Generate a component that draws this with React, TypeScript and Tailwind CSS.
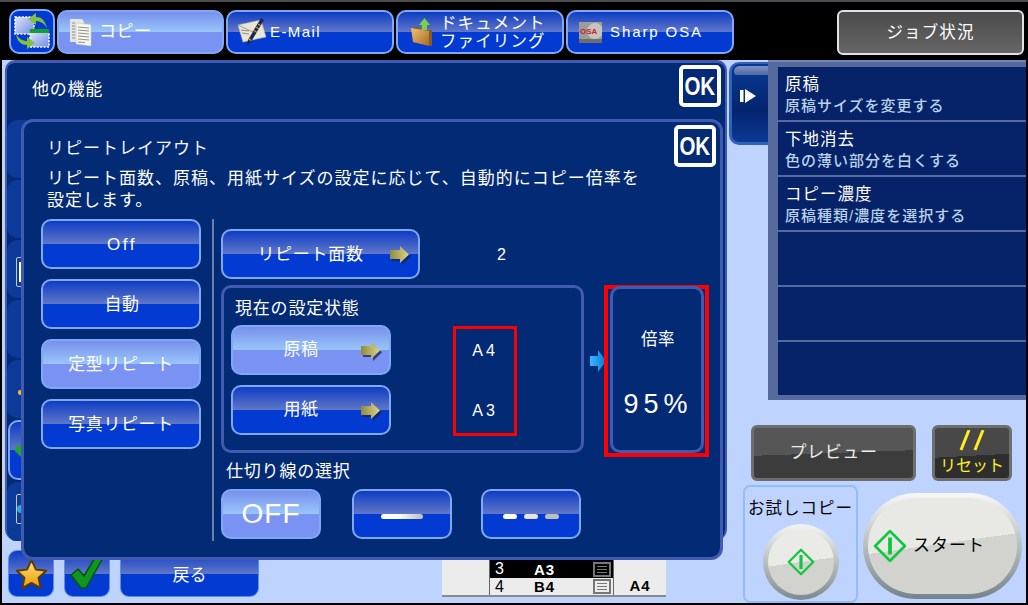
import React from "react";

const normal = "bg-[linear-gradient(#0e3cc4_0%,#6178c8_50%,#033ad2_50%,#033ad2_100%)]";
const selected = "bg-[linear-gradient(#7690ec_0%,#9ac6fa_50%,#7a93f2_50%,#7a93f2_100%)]";

function Gloss({ on, className, children }: { on?: boolean; className?: string; children?: React.ReactNode }) {
  return (
    <div className={`relative flex shrink-0 items-center justify-center rounded-[10px] border-2 border-[#7fa9f6] text-white ${on ? selected : normal} ${className ?? ""}`}>
      {children}
    </div>
  );
}

function Gold({ id }: { id: string }) {
  return (
    <svg width="23" height="20" viewBox="0 0 23 20" className="absolute right-[6px] top-[15px]">
      <defs>
        <linearGradient id={id} x1="0" y1="0" x2="1" y2="0">
          <stop offset="0" stopColor="#8f8a3e" />
          <stop offset="1" stopColor="#dcd68c" />
        </linearGradient>
      </defs>
      <path d="M1 4h10V0l9 8.500-9 8.500v-4H1z" fill="#1c2450" opacity=".75" transform="translate(2 2)" />
      <path d="M1 4h10V0l9 8.500-9 8.500v-4H1z" fill={`url(#${id})`} />
    </svg>
  );
}

function OkBtn() {
  return (
    <div className="flex h-[42px] w-[42px] items-center justify-center rounded-[5px] border-4 border-white bg-[#032a75] text-white">
      <span className="inline-block scale-x-[0.82] font-['Liberation_Sans',sans-serif] text-[25px] font-bold leading-none">OK</span>
    </div>
  );
}

function Diamond({ size }: { size: number }) {
  return (
    <svg width={size} height={size} viewBox="0 0 32 32">
      <path d="M16 2 30 16 16 30 2 16z" fill="none" stroke="#12c63f" strokeWidth="2.6" strokeLinejoin="round" />
      <path d="M16 8v16" stroke="#12c63f" strokeWidth="3.6" />
    </svg>
  );
}

function SwapIcon() {
  return (
    <svg width="38" height="38" viewBox="0 0 38 38">
      <defs>
        <linearGradient id="scr" x1="0" y1="0" x2="1" y2="1">
          <stop offset="0" stopColor="#dfe6fa" />
          <stop offset="1" stopColor="#6f8be0" />
        </linearGradient>
      </defs>
      <rect x="2" y="4" width="19" height="17" fill="url(#scr)" stroke="#fff" strokeWidth="1.6" strokeDasharray="2 1.4" />
      <rect x="17" y="19" width="19" height="15" fill="url(#scr)" stroke="#fff" strokeWidth="1.6" strokeDasharray="2 1.4" />
      <rect x="17" y="16" width="19" height="4" fill="#12a02c" />
      <path d="M34 15C32 7 28 4 23 4V0l-8 6 8 6V8c4 0 8 2 11 7z" fill="#7fc23e" />
      <path d="M3 21c1 8 6 11 11 11v4l8-6-8-6v4c-4 0-8-2-11-7z" fill="#7fc23e" />
    </svg>
  );
}

function CopyIcon() {
  return (
    <svg width="24" height="29" viewBox="0 0 24 29">
      <path d="M1 1h12l2 3v20H1z" fill="#e6e6e0" />
      <path d="M7 5 22 6.500V28L7 26z" fill="#f7f7f2" stroke="#c5c5bf" strokeWidth=".6" />
      <path d="M3 5h3M3 8h3M3 11h3M3 14h3M3 17h3M3 20h3M9 9l11 1M9 12l11 1M9 15l11 1M9 18l11 1M9 21l11 1M9 24l7 .6" stroke="#77776f" strokeWidth=".8" />
    </svg>
  );
}

function MailIcon() {
  return (
    <svg width="30" height="30" viewBox="0 0 30 30">
      <path d="M1 8 24 3l5 17-23 5z" fill="#e9e6d8" stroke="#b8b4a2" strokeWidth=".6" />
      <path d="M1 8 16 15 24 3" fill="none" stroke="#8f8c7c" strokeWidth=".8" />
      <path d="M4 13l8 1M5 16l7 1" stroke="#77756a" strokeWidth=".8" />
      <path d="M24 1 27 3 14 25 10 29 11 23z" fill="#1c2a50" />
      <path d="M21 7 24 9M19 10l3 2M17 13.500l3 2" stroke="#c9953a" strokeWidth="1.3" />
      <path d="M12 22l2 1.500" stroke="#d8a548" strokeWidth="1.500" />
    </svg>
  );
}

function FolderIcon() {
  return (
    <svg width="24" height="30" viewBox="0 0 24 30">
      <defs>
        <linearGradient id="fold" x1="0" y1="0" x2="1" y2="1">
          <stop offset="0" stopColor="#f0c078" />
          <stop offset="1" stopColor="#a86a22" />
        </linearGradient>
      </defs>
      <path d="M9 8 14.500 1 20 8h-3v7h-5V8z" fill="#7fd048" />
      <path d="M3 10h6l2 3h11v16L3 25z" fill="#8a5a20" />
      <path d="M1 11 19 14v15L3 25z" fill="url(#fold)" />
    </svg>
  );
}

function OsaIcon() {
  return (
    <svg width="23" height="21" viewBox="0 0 23 21">
      <rect width="23" height="21" fill="#9c9c98" />
      <rect width="23" height="4" y="17" fill="#6e6e6a" />
      <circle cx="16" cy="9" r="8" fill="#c4c4c0" />
      <text x="1" y="12" fontFamily="Liberation Sans" fontWeight="700" fontSize="8" fill="#c8202c">OSA</text>
    </svg>
  );
}

function Star() {
  return (
    <svg width="33" height="33" viewBox="0 0 32 32">
      <defs>
        <linearGradient id="st" x1="0" y1="0" x2="0" y2="1">
          <stop offset="0" stopColor="#ffe27a" />
          <stop offset="1" stopColor="#e89a08" />
        </linearGradient>
      </defs>
      <path d="M16 2l4.300 9.300 10 1.100-7.500 6.800 2.100 10-8.900-5.100-8.900 5.100 2.100-10-7.500-6.800 10-1.100z" fill="url(#st)" stroke="#5c3a00" strokeWidth="1.800" strokeLinejoin="round" />
    </svg>
  );
}

function Check() {
  return (
    <svg width="34" height="34" viewBox="0 0 34 34">
      <path d="M1 19l7-6 6 7L26 0l7 2-17 30h-5z" fill="#10961f" stroke="#07500d" strokeWidth="1.500" strokeLinejoin="round" />
    </svg>
  );
}

function Tile({ className, children }: { className?: string; children?: React.ReactNode }) {
  return <div className={`relative h-[58px] w-[30px] rounded-[10px] bg-[#0c3a98] ${className ?? ""}`}>{children}</div>;
}

const rows = [
  ["原稿", "原稿サイズを変更する"],
  ["下地消去", "色の薄い部分を白くする"],
  ["コピー濃度", "原稿種類/濃度を選択する"],
  ["", ""],
  ["", ""],
  ["", ""],
];

function Lines() {
  return (
    <div className="flex w-[18px] flex-col gap-[2px] border-2 border-[#777] p-[2px]">
      <div className="h-px bg-[#777]" />
      <div className="h-px bg-[#777]" />
      <div className="h-px bg-[#777]" />
    </div>
  );
}

export default function App() {
  return (
    <div className="relative flex h-[605px] w-[1028px] flex-col overflow-hidden bg-black font-['Liberation_Sans','Noto_Sans_CJK_JP',sans-serif] text-white">
      <div className="h-[2px] shrink-0 bg-[#4b4b50]" />

      {/* header */}
      <div className="flex h-[58px] shrink-0 pl-[9px] pt-[7px]">
        <div className="flex h-[45px] w-[46px] items-center justify-center rounded-[10px] border-2 border-[#7fa9f6] bg-[#033ad2]">
          <SwapIcon />
        </div>
        <Gloss on className="ml-[2px] mt-[1px] h-[44px] w-[167px] !justify-start pl-[10px]">
          <CopyIcon />
          <span className="ml-[6px] text-[17px] tracking-[0.5px]">コピー</span>
        </Gloss>
        <Gloss className="ml-[2px] mt-[1px] h-[44px] w-[168px] !justify-start pl-[9px]">
          <MailIcon />
          <span className="ml-[3px] text-[15px] tracking-[1.4px]">E-Mail</span>
        </Gloss>
        <Gloss className="ml-[2px] mt-[1px] h-[44px] w-[168px] !justify-start pl-[12px]">
          <FolderIcon />
          <span className="ml-[6px] text-center text-[16.500px] leading-[18px] tracking-[1.1px]">ドキュメント<br />ファイリング</span>
        </Gloss>
        <Gloss className="ml-[2px] mt-[1px] h-[44px] w-[168px] !justify-start pl-[11px]">
          <OsaIcon />
          <span className="ml-[8px] text-[15px] tracking-[1.900px]">Sharp OSA</span>
        </Gloss>
        <div className="ml-[103px] mt-[1px] flex h-[45px] w-[187px] items-center justify-center rounded-[6px] border-2 border-[#e2e2e2] bg-[linear-gradient(#4a4a4a,#666)] text-[16.500px] tracking-[1.1px]">
          ジョブ状況
        </div>
      </div>

      {/* main */}
      <div className="relative flex min-h-0 flex-1 border-b-2 border-l-2 border-r-2 border-black bg-[#bfd3ff]">
        {/* left column */}
        <div className="flex w-[725px] shrink-0 flex-col pl-[3px]">
          <div className="relative h-[481px] w-[722px] overflow-hidden rounded-b-[12px] rounded-tl-[10px] rounded-tr-[10px] border-l-2 border-r-2 border-t-[3px] border-[#3f5ab0] bg-[#032a75]">
            <div className="flex h-[57px] items-start justify-between pl-[25px] pr-[4px] pt-[2px]">
              <span className="mt-[12px] text-[17px] tracking-[0.75px]">他の機能</span>
              <OkBtn />
            </div>
            <div className="flex flex-col gap-[2px]">
              <Tile />
              <Tile />
              <Tile className="overflow-hidden">
                <div className="absolute left-[9px] top-[17px] h-[30px] w-[14px] rounded-[2px] border border-[#c8c8c8] bg-[#0c3a98] pl-[2px] pt-[4px]">
                  <div className="h-[20px] w-[4px] bg-white" />
                </div>
              </Tile>
              <Tile />
              <Tile>
                <div className="absolute left-[11px] top-[30px] h-[5px] w-[4px] rounded-full bg-[#ffb020]" />
              </Tile>
              <Gloss className="ml-[1px] h-[60px] w-[30px] !justify-start">
                <div className="ml-[4px] h-0 w-0 border-y-[10px] border-r-[10px] border-y-transparent border-r-[#1fa52a]" />
              </Gloss>
              <Tile className="h-[60px]">
                <div className="absolute left-[9px] top-[12px] flex h-[30px] w-[14px] items-center rounded-[2px] border border-[#c8c8c8]">
                  <div className="h-[8px] w-[6px] rounded-l-full bg-[#2aa8f0]" />
                </div>
              </Tile>
            </div>
          </div>

          {/* bottom row */}
          <div className="mt-[9px] flex h-[47px] pl-[3px]">
            <div className="flex h-[47px] w-[46px] items-end justify-center rounded-[9px] border border-[#5b8cf0] bg-[linear-gradient(#0e3cc4_0%,#6178c8_52%,#033ad2_52%,#033ad2_100%)] pb-[5px]">
              <Star />
            </div>
            <div className="ml-[10px] flex h-[47px] w-[46px] items-end justify-center rounded-[9px] border border-[#5b8cf0] bg-[linear-gradient(#0e3cc4_0%,#6178c8_52%,#033ad2_52%,#033ad2_100%)] pb-[6px]">
              <Check />
            </div>
            <div className="ml-[10px] flex h-[47px] w-[139px] items-end justify-center rounded-[9px] border border-[#5b8cf0] bg-[linear-gradient(#0e3cc4_0%,#6178c8_52%,#033ad2_52%,#033ad2_100%)] pb-[10px] text-[17px] leading-[20px]">
              戻る
            </div>
            <div className="ml-[183px] flex h-[47px] w-[224px] border-b-2 border-[#8a8a8a] bg-[#ececec] text-black">
              <div className="w-[48px] border-r border-[#666]" />
              <div className="flex w-[124px] flex-col border-r border-[#666]">
                <div className="flex h-[28px] items-end bg-black pl-[5px] pr-[2px] text-white">
                  <span className="w-[39px] text-[16px] leading-[18px]">3</span>
                  <span className="w-[52px] text-[15px] font-bold leading-[16px] tracking-[1px]">A3</span>
                  <div className="mb-[1px] ml-auto">
                    <Lines />
                  </div>
                </div>
                <div className="flex flex-1 items-center pl-[5px] pr-[2px]">
                  <span className="w-[39px] text-[16px] leading-[17px]">4</span>
                  <span className="w-[52px] text-[15px] font-bold leading-[16px] tracking-[1px]">B4</span>
                  <div className="ml-auto">
                    <Lines />
                  </div>
                </div>
              </div>
              <div className="flex flex-1 items-end justify-center pb-[1px] text-[15px] font-bold leading-[16px] tracking-[1px]">A4</div>
            </div>
          </div>
        </div>

        {/* right column */}
        <div className="flex min-w-0 flex-1 flex-col pl-[2px]">
          <div className="flex h-[340px] shrink-0 items-start">
            <div className="mt-[2px] flex h-[83px] w-[39px] shrink-0 flex-col rounded-bl-[10px] rounded-tl-[10px] border-b-[3px] border-l-[3px] border-t-[2px] border-[#2f62b8] bg-[linear-gradient(#0a3a96,#05246e_60%,#0a3a96)] pt-[2px]">
              <div className="ml-[2px] h-[9px] rounded-bl-[4px] rounded-tl-[6px] bg-[linear-gradient(#7f92c0,#4d68ab)]" />
              <svg width="17" height="14" viewBox="0 0 17 14" className="ml-[8px] mt-[14px]">
                <rect x="0" y="1" width="3.500" height="12" fill="#fff" />
                <path d="M5 0l11 7-11 7z" fill="#fff" />
              </svg>
            </div>
            <div className="h-[340px] flex-1 border-t-2 border-[#7185bd] bg-[#566a9e] pl-[10px] pt-[5px]">
              {rows.map((r, i) => (
                <div key={i} className="mb-[2px] flex h-[53px] flex-col bg-[#062268] pl-[7px] pt-[6px]">
                  <span className="text-[16.500px] leading-[22px] tracking-[1px]">{r[0]}</span>
                  <span className="text-[15px] font-medium leading-[21px] tracking-[1px] text-[#b9d2e8]">{r[1]}</span>
                </div>
              ))}
            </div>
          </div>

          <div className="mt-[25px] flex h-[56px] shrink-0 pl-[22px]">
            <div className="flex h-[56px] w-[165px] items-center justify-center rounded-[6px] border-[3px] border-[#6e6e6e] bg-[linear-gradient(178deg,#565656_50%,#3c3c3c_50%)] text-[17px] tracking-[0.6px] text-[#ececec]">
              プレビュー
            </div>
            <div className="ml-[16px] flex h-[56px] w-[80px] flex-col items-center rounded-[6px] border-[3px] border-[#6e6e6e] bg-[linear-gradient(177deg,#484848_55%,#2e2e2e_55%)] text-[#ffee22]">
              <svg width="26" height="22" viewBox="0 0 26 22" className="mt-[2px] shrink-0">
                <path d="M10 0 2 20M24 0l-8 20" stroke="#ffee22" strokeWidth="3" />
              </svg>
              <span className="mt-[4px] whitespace-nowrap text-[16px] leading-[20px]">リセット</span>
            </div>
          </div>

          <div className="mt-[4px] flex min-h-0 flex-1 pl-[14px]">
            <div className="flex h-[118px] w-[115px] shrink-0 flex-col items-center rounded-[7px] border-2 border-[#93bcfb] pt-[11px] text-black">
              <span className="whitespace-nowrap text-[16.500px] leading-[20px] tracking-[1px]">お試しコピー</span>
              <div className="mt-[6px] flex h-[76px] w-[76px] shrink-0 items-center justify-center rounded-full bg-[linear-gradient(#f4f4f2,#7e8a8e)] p-[5px]">
                <div className="flex h-full w-full items-center justify-center rounded-full bg-[linear-gradient(172deg,#eaeae6_50%,#d2d3ce_50%)]">
                  <Diamond size={28} />
                </div>
              </div>
            </div>
            <div className="ml-[5px] mt-[8px] flex h-[106px] w-[159px] shrink-0 items-center justify-center rounded-full bg-[linear-gradient(#f8f8f6,#75838a)] p-[5px] text-black">
              <div className="flex h-full w-full items-center rounded-full bg-[linear-gradient(172deg,#e8e9e5_48%,#d2d3ce_48%)] pl-[5px]">
                <Diamond size={34} />
                <span className="ml-[6px] text-[17px] tracking-[1px]">スタート</span>
              </div>
            </div>
          </div>
        </div>

        {/* dialog on top */}
        <div className="absolute left-[19px] top-[59px] h-[441px] w-[702px] rounded-[12px] border-[3px] border-[#3f5ab0] bg-[#032a75]">
          <div className="absolute right-[4px] top-[3px]">
            <OkBtn />
          </div>
          <div className="h-[97px] pl-[23px] pt-[16px] text-[17px] leading-[22px] tracking-[1px]">
            <div className="mb-[8px] text-[#f2f5fb]">リピートレイアウト</div>
            <div>リピート面数、原稿、用紙サイズの設定に応じて、自動的にコピー倍率を</div>
            <div>設定します。</div>
          </div>
          <div className="flex pl-[17px]">
            <div className="flex w-[160px] shrink-0 flex-col gap-[10px]">
              <Gloss className="h-[50px] pl-[2px] pt-[2px] text-[17px] tracking-[2.6px]">Off</Gloss>
              <Gloss className="h-[50px] pl-[2px] pt-[2px] text-[17px] tracking-[0.5px]">自動</Gloss>
              <Gloss on className="h-[50px] pt-[2px] text-[17px] tracking-[0.6px]">定型リピート</Gloss>
              <Gloss className="h-[50px] pt-[2px] text-[17px] tracking-[0.6px]">写真リピート</Gloss>
            </div>
            <div className="ml-[11px] h-[322px] w-[2px] shrink-0 bg-[#6a7fa8]" />
            <div className="ml-[7px] flex flex-1 flex-col pt-[10px]">
              <div className="flex h-[50px] items-center">
                <Gloss className="h-[50px] w-[199px] pr-[20px] pt-[1px] text-[17px] tracking-[0.7px]">
                  リピート面数
                  <Gold id="g1" />
                </Gloss>
                <span className="ml-[77px] pt-[2px] text-[16px] tracking-[1px]">2</span>
              </div>
              <div className="mt-[6px] flex h-[172px] items-start">
                <div className="flex h-[168px] w-[363px] shrink-0 flex-col rounded-[10px] border-[3px] border-[#3f5ab0] pl-[7px] pt-[11px]">
                  <div className="pl-[4px] text-[17px] leading-[20px] tracking-[0.8px]">現在の設定状態</div>
                  <div className="mt-[1px] flex items-start">
                    <div className="mt-[5px] flex flex-col gap-[10px]">
                      <Gloss on className="h-[50px] w-[160px] pr-[20px] text-[17px] tracking-[0.5px]">
                        原稿
                        <Gold id="g2" />
                      </Gloss>
                      <Gloss className="h-[50px] w-[160px] pr-[20px] text-[17px] tracking-[0.5px]">
                        用紙
                        <Gold id="g3" />
                      </Gloss>
                    </div>
                    <div className="ml-[62px] mt-[6px] flex h-[110px] w-[64px] shrink-0 flex-col items-center gap-[40px] border-[3px] border-[#ff0000] pt-[12px] text-[16px] leading-[20px] tracking-[3px]">
                      <span>A4</span>
                      <span>A3</span>
                    </div>
                  </div>
                </div>
                <svg width="17" height="22" viewBox="0 0 17 22" className="ml-[6px] mt-[65px] shrink-0">
                  <defs>
                    <linearGradient id="blue" x1="0" y1="0" x2="1" y2="0">
                      <stop offset="0" stopColor="#38b8ff" />
                      <stop offset="1" stopColor="#0a78d8" />
                    </linearGradient>
                  </defs>
                  <path d="M0 6h8V0l8 11-8 11v-6H0z" fill="url(#blue)" />
                </svg>
                <div className="-ml-[3px] flex h-[172px] w-[105px] shrink-0 items-start justify-center border-[4px] border-[#ff0000]">
                  <div className="-mt-[3px] flex h-[167px] w-[94px] shrink-0 flex-col items-center rounded-[10px] border-[3px] border-[#3f5ab0] pl-[3px] pt-[39px]">
                    <span className="text-[16.500px] leading-[22px] tracking-[0.5px]">倍率</span>
                    <span className="mt-[39px] whitespace-nowrap text-[27px] leading-[30px] tracking-[5px]">95%</span>
                  </div>
                </div>
              </div>
              <div className="pl-[5px] pt-[5px] text-[17px] leading-[20px] tracking-[0.8px]">仕切り線の選択</div>
              <div className="mt-[7px] flex">
                <Gloss on className="h-[50px] w-[100px] text-[28px] tracking-[1px]">OFF</Gloss>
                <Gloss className="ml-[31px] h-[50px] w-[100px]">
                  <div className="mt-[4px] h-[5px] w-[42px] rounded-full bg-[linear-gradient(90deg,#fff_40%,#bdbdbd)]" />
                </Gloss>
                <Gloss className="ml-[29px] h-[50px] w-[100px]">
                  <div className="mt-[4px] flex gap-[7px]">
                    <div className="h-[5px] w-[14px] rounded-full bg-white" />
                    <div className="h-[5px] w-[14px] rounded-full bg-[#e6e6e6]" />
                    <div className="h-[5px] w-[14px] rounded-full bg-[#bdbdbd]" />
                  </div>
                </Gloss>
              </div>
            </div>
          </div>
        </div>
      </div>
    </div>
  );
}
